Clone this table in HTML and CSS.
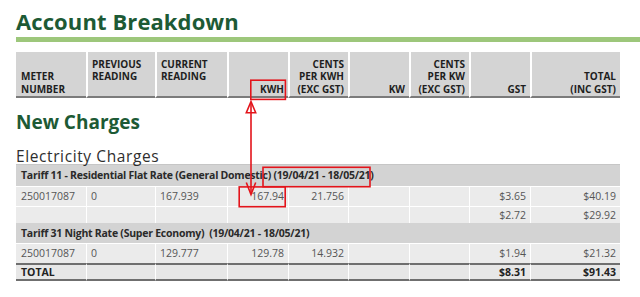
FILE: index.html
```html
<!DOCTYPE html>
<html lang="en">
<head>
<meta charset="utf-8">
<title>Account Breakdown</title>
<link rel="stylesheet" href="styles.css">
</head>
<body>
<div class="page">
  <h1 class="title">Account Breakdown</h1>
  <div class="rule"></div>

  <table class="grid head">
    <colgroup>
      <col class="c1"><col class="c2"><col class="c3"><col class="c4"><col class="c5"><col class="c6"><col class="c7"><col class="c8"><col class="c9">
    </colgroup>
    <tr>
      <th class="l">METER<br>NUMBER</th>
      <th class="l">PREVIOUS<br>READING<br>&nbsp;</th>
      <th class="l">CURRENT<br>READING<br>&nbsp;</th>
      <th>KWH</th>
      <th>CENTS<br>PER KWH<br>(EXC GST)</th>
      <th>KW</th>
      <th>CENTS<br>PER KW<br>(EXC GST)</th>
      <th>GST</th>
      <th>TOTAL<br>(INC GST)</th>
    </tr>
  </table>

  <h2 class="section">New Charges</h2>
  <h3 class="sub">Electricity Charges</h3>

  <table class="grid body">
    <colgroup>
      <col class="c1"><col class="c2"><col class="c3"><col class="c4"><col class="c5"><col class="c6"><col class="c7"><col class="c8"><col class="c9">
    </colgroup>
    <tr class="tariff t1">
      <td colspan="9">Tariff 11 - Residential Flat Rate (General Domestic) (19/04/21 - 18/05/21)</td>
    </tr>
    <tr class="data">
      <td>250017087</td><td>0</td><td>167.939</td><td class="r">167.94</td><td class="r">21.756</td><td></td><td></td><td class="r">$3.65</td><td class="r">$40.19</td>
    </tr>
    <tr class="data short">
      <td></td><td></td><td></td><td></td><td></td><td></td><td></td><td class="r">$2.72</td><td class="r">$29.92</td>
    </tr>
    <tr class="tariff t2">
      <td colspan="9">Tariff 31 Night Rate (Super Economy)&nbsp; (19/04/21 - 18/05/21)</td>
    </tr>
    <tr class="data">
      <td>250017087</td><td>0</td><td>129.777</td><td class="r">129.78</td><td class="r">14.932</td><td></td><td></td><td class="r">$1.94</td><td class="r">$21.32</td>
    </tr>
    <tr class="total">
      <td>TOTAL</td><td></td><td></td><td></td><td></td><td></td><td></td><td class="r">$8.31</td><td class="r">$91.43</td>
    </tr>
  </table>

  <svg class="marks" width="640" height="297" viewBox="0 0 640 297" aria-hidden="true">
    <g fill="none" stroke="#e3141b" stroke-width="1.6">
      <rect x="250.8" y="80.2" width="34.6" height="19.2"/>
      <rect x="263" y="167.3" width="107" height="19.4"/>
      <rect x="239.2" y="186.9" width="46" height="19.8"/>
      <line x1="251" y1="102" x2="251" y2="194"/>
      <path d="M251 101.5 L246.3 112.8 L255.7 112.8 Z"/>
      <path d="M246.3 182.5 L251 194.5 L255.7 182.5"/>
    </g>
  </svg>
</div>
</body>
</html>
```

FILE: styles.css
```css
html, body {
  margin: 0;
  padding: 0;
  background: #ffffff;
}

body {
  font-family: "Open Sans", "Liberation Sans", sans-serif;
  color: #4a4a4a;
}

.page {
  position: relative;
  width: 640px;
  height: 297px;
  overflow: hidden;
  padding-left: 16px;
  box-sizing: border-box;
}

.title {
  margin: 10px 0 0;
  font-size: 22px;
  line-height: 23px;
  font-weight: 700;
  color: #1d5a35;
  letter-spacing: 0.1px;
}

.rule {
  margin-top: 4px;
  height: 5px;
  background: #9dc77b;
}

.grid {
  width: 604px;
  table-layout: fixed;
  border-collapse: separate;
  border-spacing: 0;
}

.c1 { width: 70px; }
.c2 { width: 69px; }
.c3 { width: 72px; }
.c4 { width: 61px; }
.c5 { width: 60px; }
.c6 { width: 61px; }
.c7 { width: 60px; }
.c8 { width: 61px; }
.c9 { width: 90px; }

/* header table */
.head {
  margin-top: 10px;
}

.head tr {
  height: 46px;
}

.head th {
  background: #d4d4d4;
  border-left: 2px solid #ffffff;
  border-bottom: 2px solid #7b7b7b;
  padding: 0 4px 1px 4px;
  vertical-align: bottom;
  text-align: right;
  font-size: 10px;
  line-height: 12.5px;
  font-weight: 700;
  color: #1e1e1e;
  white-space: nowrap;
}

.head th:first-child {
  border-left: 0;
  padding-left: 5px;
}

.head th.l {
  text-align: left;
}

/* headings */
.section {
  margin: 14px 0 0;
  font-size: 19px;
  line-height: 20px;
  font-weight: 700;
  color: #1d5a35;
}

.sub {
  margin: 17px 0 0;
  font-size: 15.5px;
  line-height: 15px;
  font-weight: 400;
  color: #2e2e2e;
  letter-spacing: 0.6px;
}

/* body table */
.body {
  border-top: 1px solid #c6c6c6;
}

.body td {
  font-size: 10.5px;
  color: #555555;
  padding: 0 4px;
  white-space: nowrap;
  overflow: visible;
}

.body td.r {
  text-align: right;
}

.tariff td {
  background: #d3d3d3;
  font-weight: 700;
  color: #2a2a2a;
  padding-left: 5px;
  letter-spacing: -0.25px;
}

.t1 td {
  height: 21px;
  line-height: 21px;
}

.t2 td {
  height: 20px;
  line-height: 20px;
}

.data td {
  background: #ebebeb;
  border-top: 1px solid #ffffff;
  border-left: 1px solid #ffffff;
  height: 19px;
  line-height: 19px;
}

.data.short td {
  height: 16px;
  line-height: 16px;
  vertical-align: top;
}

.data td:first-child,
.total td:first-child {
  border-left: 0;
  padding-left: 5px;
}

.total td {
  background: #e7e7e7;
  border-top: 2px solid #6f6f6f;
  border-bottom: 2px solid #6f6f6f;
  border-left: 1px solid #ffffff;
  height: 14px;
  line-height: 14px;
  font-weight: 700;
  color: #222222;
}

.marks {
  position: absolute;
  left: 0;
  top: 0;
  pointer-events: none;
}
```
